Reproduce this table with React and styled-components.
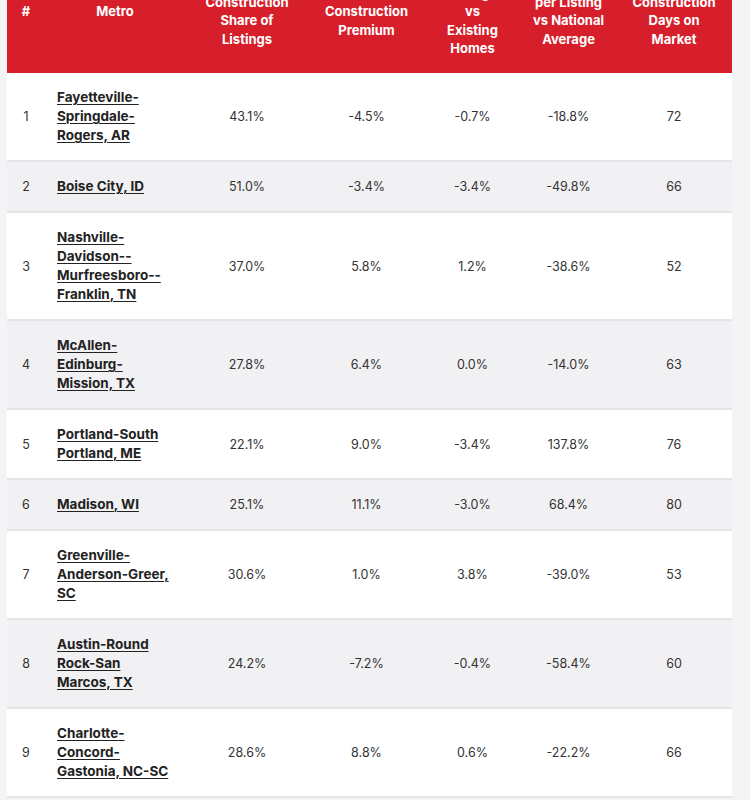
import React from 'react'
import styled, { createGlobalStyle } from 'styled-components'

const GlobalStyle = createGlobalStyle`
    html, body {
        margin: 0;
        padding: 0;
        background: #f4f3f5;
    }
    body {
        font-family: Inter, "Noto Sans", sans-serif;
        color: #333;
        overflow: hidden;
    }
`

const Page = styled.div`
    width: 750px;
    height: 800px;
    overflow: hidden;
    padding-left: 7px;
    box-sizing: border-box;
`

const Table = styled.table`
    width: 725px;
    margin-top: -49px;
    border-collapse: collapse;
    table-layout: fixed;
`

const Col = styled.col`
    width: ${props => props.w}px;
`

const Head = styled.th`
    background: #d61f2a;
    color: #fff;
    font-family: Inter, "Noto Sans", sans-serif;
    font-weight: 700;
    font-size: 13px;
    line-height: 18.5px;
    text-align: center;
    vertical-align: middle;
    padding: 14px 4px 15.5px;
    white-space: nowrap;
    overflow: hidden;
`

const Row = styled.tr`
    background: ${props => props.shaded ? '#f1f0f2' : '#fff'};
    border-bottom: 2px solid #e5e4e7;
`

const Cell = styled.td`
    font-size: ${props => props.left ? '13.5px' : '12.5px'};
    line-height: 19px;
    color: #333;
    text-align: ${props => props.left ? 'left' : 'center'};
    padding: ${props => props.left ? '15px 8px 15px 12px' : '15px 4px'};
    vertical-align: middle;
`

const MetroLink = styled.a`
    color: #222;
    font-weight: 700;
    text-decoration: underline;
    text-underline-offset: 2px;
    text-decoration-thickness: 1px;
`

const columns = [
    { w: 38, label: ['#'] },
    { w: 140, label: ['Metro'] },
    { w: 124, label: ['New', 'Construction', 'Share of', 'Listings'] },
    { w: 115, label: ['New', 'Construction', 'Premium'] },
    { w: 97, label: ['Price', 'Change', 'vs', 'Existing', 'Homes'] },
    { w: 95, label: ['Median Price', 'per Listing', 'vs National', 'Average'] },
    { w: 116, label: ['New', 'Construction', 'Days on', 'Market'] },
]

const rows = [
    [1, ['Fayetteville-', 'Springdale-', 'Rogers, AR'], '43.1%', '-4.5%', '-0.7%', '-18.8%', '72'],
    [2, ['Boise City, ID'], '51.0%', '-3.4%', '-3.4%', '-49.8%', '66'],
    [3, ['Nashville-', 'Davidson--', 'Murfreesboro--', 'Franklin, TN'], '37.0%', '5.8%', '1.2%', '-38.6%', '52'],
    [4, ['McAllen-', 'Edinburg-', 'Mission, TX'], '27.8%', '6.4%', '0.0%', '-14.0%', '63'],
    [5, ['Portland-South', 'Portland, ME'], '22.1%', '9.0%', '-3.4%', '137.8%', '76'],
    [6, ['Madison, WI'], '25.1%', '11.1%', '-3.0%', '68.4%', '80'],
    [7, ['Greenville-', 'Anderson-Greer,', 'SC'], '30.6%', '1.0%', '3.8%', '-39.0%', '53'],
    [8, ['Austin-Round', 'Rock-San', 'Marcos, TX'], '24.2%', '-7.2%', '-0.4%', '-58.4%', '60'],
    [9, ['Charlotte-', 'Concord-', 'Gastonia, NC-SC'], '28.6%', '8.8%', '0.6%', '-22.2%', '66'],
]

const lines = (parts) => parts.map((p, i) => (
    <React.Fragment key={i}>{i > 0 && <br />}{p}</React.Fragment>
))

const App = () => {
  return (
    <Page>
        <GlobalStyle />
        <Table>
            <colgroup>
                {columns.map((c, i) => <Col key={i} w={c.w} />)}
            </colgroup>
            <thead>
                <tr>
                    {columns.map((c, i) => <Head key={i}>{lines(c.label)}</Head>)}
                </tr>
            </thead>
            <tbody>
                {rows.map((r, i) => (
                    <Row key={r[0]} shaded={i % 2 === 1}>
                        <Cell>{r[0]}</Cell>
                        <Cell left><MetroLink href="#">{lines(r[1])}</MetroLink></Cell>
                        {r.slice(2).map((v, j) => <Cell key={j}>{v}</Cell>)}
                    </Row>
                ))}
            </tbody>
        </Table>
    </Page>
  )
}

export default App
